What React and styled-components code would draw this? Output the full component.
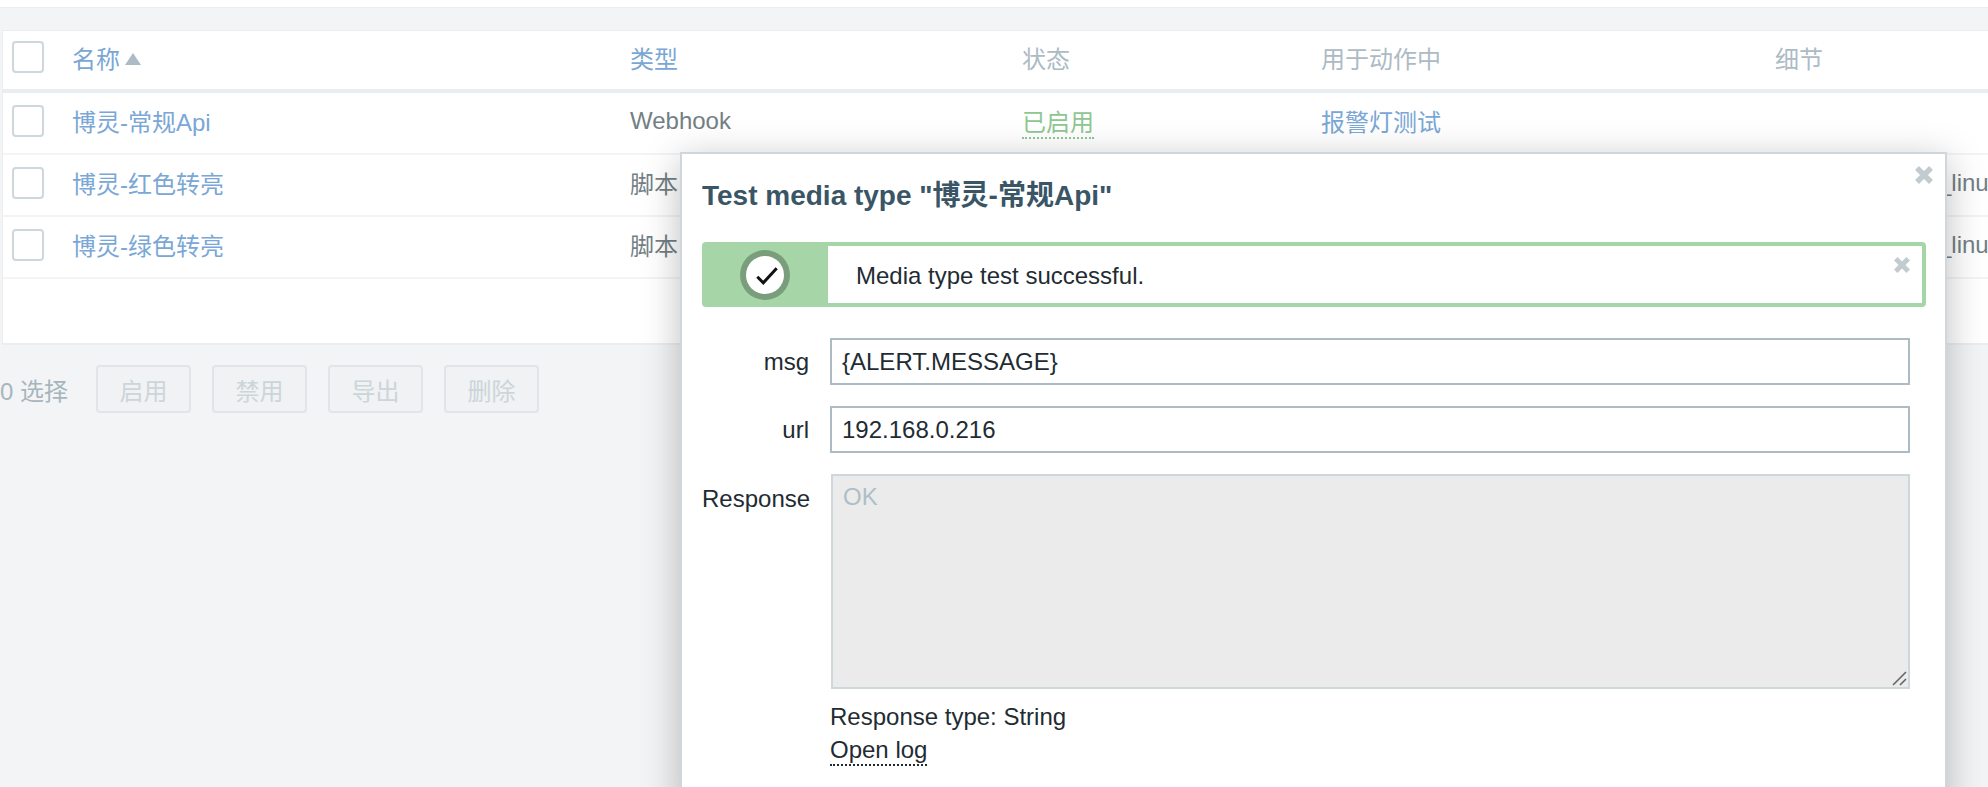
import React from 'react'
import styled, { createGlobalStyle } from 'styled-components'

const GlobalStyle = createGlobalStyle`
  html, body {
    margin: 0;
    padding: 0;
    background: #f2f4f6;
  }
`

const FONT = `"Liberation Sans", "Noto Sans CJK SC", sans-serif`

const rows = [
  { name: '博灵-常规Api', type: 'Webhook', status: '已启用', action: '报警灯测试' },
  { name: '博灵-红色转亮', type: '脚本', detail: '_linu' },
  { name: '博灵-绿色转亮', type: '脚本', detail: '_linu' }
]

const Page = styled.div`
  position: relative;
  width: 1988px;
  height: 787px;
  overflow: hidden;
  background: #f2f4f6;
  font-family: ${FONT};
  font-size: 24px;
  color: #1f2c33;
`

const TopStrip = styled.div`
  height: 7px;
  background: #fff;
  border-bottom: 1px solid #ebeef1;
  margin-bottom: 22px;
`

const Table = styled.div`
  margin-left: 2px;
  background: #fff;
  border-left: 1px solid #ebeef1;
  border-top: 1px solid #ebeef1;
  border-bottom: 2px solid #ebeef1;
`

const Row = styled.div`
  display: grid;
  grid-template-columns: 69px 558px 392px 299px 454px 1fr;
  align-items: center;
  box-sizing: border-box;
  height: 62px;
  padding-bottom: ${(p) => (p.$head ? '6px' : '5px')};
  border-bottom: ${(p) => (p.$head ? '4px solid #e9edf0' : '2px solid #f2f4f6')};
`

const Filler = styled.div`
  height: 64px;
`

const Checkbox = styled.span`
  display: block;
  box-sizing: border-box;
  width: 32px;
  height: 32px;
  margin-left: 9px;
  border: 2px solid #cdd7dc;
  border-radius: 4px;
  background: #fff;
`

const Link = styled.span`
  color: #7aa7d6;
`

const HeadLink = styled(Link)`
  display: inline-flex;
  align-items: center;
  gap: 5px;
`

const SortArrow = styled.i`
  display: block;
  width: 0;
  height: 0;
  margin-top: 4px;
  border-left: 8px solid transparent;
  border-right: 8px solid transparent;
  border-bottom: 12px solid #acbbc4;
`

const HeadText = styled.span`
  color: #acbbc4;
`

const Muted = styled.span`
  color: #737f85;
`

const Status = styled.span`
  color: #8fc792;
  border-bottom: 2px dotted #8fc792;
  padding-bottom: 1px;
`

const DetailCell = styled.div`
  padding-left: 163px;
  white-space: nowrap;
  color: #737f85;
`

const Footer = styled.div`
  display: flex;
  align-items: center;
  padding-top: 20px;
`

const Selected = styled.span`
  width: 96px;
  color: #a7b5bd;
`

const Buttons = styled.div`
  display: flex;
  gap: 21px;
`

const FooterButton = styled.button`
  box-sizing: border-box;
  width: 95px;
  height: 48px;
  padding: 0;
  border: 2px solid #dfe5e8;
  border-radius: 4px;
  background: #f0f2f3;
  color: #ccd5da;
  font: inherit;
`

const Modal = styled.div`
  position: absolute;
  left: 680px;
  top: 152px;
  box-sizing: border-box;
  width: 1267px;
  height: 660px;
  padding: 27px 19px 0 20px;
  background: #fff;
  border: 2px solid #cfd7dc;
  box-shadow: 0 8px 36px rgba(0, 0, 0, 0.26);
`

const CloseBtn = styled.svg`
  position: absolute;
  display: block;
  fill: none;
  stroke: #c1cbd0;
  stroke-width: 5.5;
`

const Title = styled.h4`
  margin: 0 0 31px;
  font-size: 28px;
  line-height: 30px;
  font-weight: bold;
  color: #3a5565;
`

const Message = styled.div`
  position: relative;
  display: flex;
  align-items: center;
  box-sizing: border-box;
  height: 65px;
  margin-bottom: 31px;
  border: 4px solid #a6d6a8;
  border-radius: 4px;
`

const MessageIcon = styled.div`
  display: flex;
  align-items: center;
  justify-content: center;
  align-self: stretch;
  box-sizing: border-box;
  flex: 0 0 122px;
  padding-right: 4px;
  background: #a6d6a8;
`

const MessageText = styled.div`
  padding: 2px 0 0 28px;
`

const FormRow = styled.div`
  display: flex;
  gap: 21px;
  margin-bottom: ${(p) => p.$gap || 20}px;
  padding-right: 16px;
`

const Label = styled.label`
  flex: 0 0 107px;
  text-align: right;
  line-height: ${(p) => p.$height || 48}px;
`

const Field = styled.input`
  flex: 1;
  box-sizing: border-box;
  min-width: 0;
  height: 47px;
  padding: 1px 10px 0;
  border: 2px solid #acbbc4;
  background: #fff;
  color: #1f2c33;
  font: inherit;
  outline: none;
`

const Control = styled.div`
  position: relative;
  flex: 1;
  min-width: 0;
`

const ResponseBox = styled.textarea`
  display: block;
  box-sizing: border-box;
  width: 100%;
  height: 215px;
  padding: 6px 10px;
  margin: 0;
  border: 2px solid #cdd7dc;
  border-radius: 0;
  background: #ebebeb;
  color: #aebfc6;
  font: inherit;
  line-height: 30px;
  resize: none;
  outline: none;
`

const Grip = styled.svg`
  position: absolute;
  right: 3px;
  bottom: 3px;
  display: block;
  stroke: #666;
  stroke-width: 1.6;
`

const MetaLine = styled.div`
  line-height: 33px;
`

const LogLink = styled.span`
  border-bottom: 2px dotted #1f2c33;
  padding-bottom: 1px;
`

const Cross = ({ size, style }) => (
  <CloseBtn width={size} height={size} viewBox="0 0 18 18" style={style}>
    <path d="M2 2 L16 16 M16 2 L2 16" />
  </CloseBtn>
)

export default function App() {
  return (
    <Page>
      <GlobalStyle />
      <TopStrip />
      <Table>
        <Row $head>
          <Checkbox />
          <HeadLink>名称<SortArrow /></HeadLink>
          <Link>类型</Link>
          <HeadText>状态</HeadText>
          <HeadText>用于动作中</HeadText>
          <HeadText>细节</HeadText>
        </Row>
        {rows.map((r) => (
          <Row key={r.name}>
            <Checkbox />
            <Link>{r.name}</Link>
            <Muted>{r.type}</Muted>
            <div>{r.status && <Status>{r.status}</Status>}</div>
            <div>{r.action && <Link>{r.action}</Link>}</div>
            <DetailCell>{r.detail}</DetailCell>
          </Row>
        ))}
        <Filler />
      </Table>
      <Footer>
        <Selected>0 选择</Selected>
        <Buttons>
          <FooterButton disabled>启用</FooterButton>
          <FooterButton disabled>禁用</FooterButton>
          <FooterButton disabled>导出</FooterButton>
          <FooterButton disabled>删除</FooterButton>
        </Buttons>
      </Footer>

      <Modal>
        <Cross size={18} style={{ right: 12, top: 12 }} />
        <Title>Test media type "博灵-常规Api"</Title>
        <Message>
          <MessageIcon>
            <svg width="50" height="50" viewBox="0 0 50 50">
              <circle cx="25" cy="25" r="25" fill="#7a9e7c" />
              <circle cx="25" cy="25" r="19" fill="#fff" />
              <path d="M17.3 26.8 L23.3 32.8 L36.7 18.3" fill="none" stroke="#111" strokeWidth="3" />
            </svg>
          </MessageIcon>
          <MessageText>Media type test successful.</MessageText>
          <Cross size={16} style={{ right: 12, top: 11 }} />
        </Message>
        <FormRow>
          <Label>msg</Label>
          <Field readOnly value="{ALERT.MESSAGE}" />
        </FormRow>
        <FormRow>
          <Label>url</Label>
          <Field readOnly value="192.168.0.216" />
        </FormRow>
        <FormRow $gap={11}>
          <Label $height={49}>Response</Label>
          <Control>
            <ResponseBox disabled value="OK" />
            <Grip width="15" height="15" viewBox="0 0 15 15">
              <path d="M1 14 L14 1 M8 14 L14 8" />
            </Grip>
          </Control>
        </FormRow>
        <FormRow $gap={0.01}>
          <Label />
          <Control>
            <MetaLine>Response type: String</MetaLine>
            <MetaLine><LogLink>Open log</LogLink></MetaLine>
          </Control>
        </FormRow>
      </Modal>
    </Page>
  )
}
